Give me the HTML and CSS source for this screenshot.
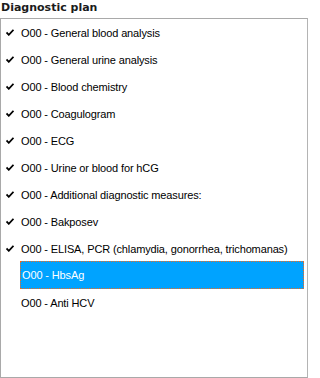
FILE: index.html
```html
<!DOCTYPE html>
<html>
<head>
<meta charset="utf-8">
<link rel="stylesheet" href="styles.css">
</head>
<body>
<div class="panel">
  <div class="title">Diagnostic plan</div>
  <div class="list">
    <div class="row"><svg class="check" width="8" height="7" viewBox="0 0 8 7"><path d="M0.5 3.5 L2.8 5.8 L7.5 0.8" fill="none" stroke="#000" stroke-width="1.8"/></svg><span>O00 - General blood analysis</span></div>
    <div class="row"><svg class="check" width="8" height="7" viewBox="0 0 8 7"><path d="M0.5 3.5 L2.8 5.8 L7.5 0.8" fill="none" stroke="#000" stroke-width="1.8"/></svg><span>O00 - General urine analysis</span></div>
    <div class="row"><svg class="check" width="8" height="7" viewBox="0 0 8 7"><path d="M0.5 3.5 L2.8 5.8 L7.5 0.8" fill="none" stroke="#000" stroke-width="1.8"/></svg><span>O00 - Blood chemistry</span></div>
    <div class="row"><svg class="check" width="8" height="7" viewBox="0 0 8 7"><path d="M0.5 3.5 L2.8 5.8 L7.5 0.8" fill="none" stroke="#000" stroke-width="1.8"/></svg><span>O00 - Coagulogram</span></div>
    <div class="row"><svg class="check" width="8" height="7" viewBox="0 0 8 7"><path d="M0.5 3.5 L2.8 5.8 L7.5 0.8" fill="none" stroke="#000" stroke-width="1.8"/></svg><span>O00 - ECG</span></div>
    <div class="row"><svg class="check" width="8" height="7" viewBox="0 0 8 7"><path d="M0.5 3.5 L2.8 5.8 L7.5 0.8" fill="none" stroke="#000" stroke-width="1.8"/></svg><span>O00 - Urine or blood for hCG</span></div>
    <div class="row"><svg class="check" width="8" height="7" viewBox="0 0 8 7"><path d="M0.5 3.5 L2.8 5.8 L7.5 0.8" fill="none" stroke="#000" stroke-width="1.8"/></svg><span>O00 - Additional diagnostic measures:</span></div>
    <div class="row"><svg class="check" width="8" height="7" viewBox="0 0 8 7"><path d="M0.5 3.5 L2.8 5.8 L7.5 0.8" fill="none" stroke="#000" stroke-width="1.8"/></svg><span>O00 - Bakposev</span></div>
    <div class="row"><svg class="check" width="8" height="7" viewBox="0 0 8 7"><path d="M0.5 3.5 L2.8 5.8 L7.5 0.8" fill="none" stroke="#000" stroke-width="1.8"/></svg><span>O00 - ELISA, PCR (chlamydia, gonorrhea, trichomanas)</span></div>
    <div class="row selected"><span>O00 - HbsAg</span></div>
    <div class="row"><span>O00 - Anti HCV</span></div>
  </div>
</div>
</body>
</html>
```
FILE: styles.css
```css
html, body {
  margin: 0;
  padding: 0;
  background: #fff;
}
.panel {
  width: 308px;
  height: 378px;
  display: flex;
  flex-direction: column;
  font-family: "Liberation Sans", Arial, sans-serif;
  font-size: 11px;
  color: #000;
}
.title {
  height: 18px;
  line-height: 16px;
  font-family: "DejaVu Sans", sans-serif;
  font-weight: bold;
  font-size: 11px;
  padding-left: 1px;
  color: #1b1b1b;
}
.list {
  box-sizing: border-box;
  width: 308px;
  height: 360px;
  border: 1px solid #a9a9a9;
  border-right-color: #b4b4b4;
  background: #fff;
}
.row {
  position: relative;
  height: 27px;
  display: flex;
  align-items: center;
  padding-left: 20px;
  white-space: nowrap;
  letter-spacing: -0.13px;
}
.check {
  position: absolute;
  left: 5px;
  top: 10px;
}
.row.selected {
  box-sizing: border-box;
  margin-left: 19px;
  width: 284px;
  height: 28px;
  margin-top: -1px;
  padding-left: 1px;
  background: #00a3ff;
  color: #fff;
  border: 1px dotted #f26b1d;
}
```
